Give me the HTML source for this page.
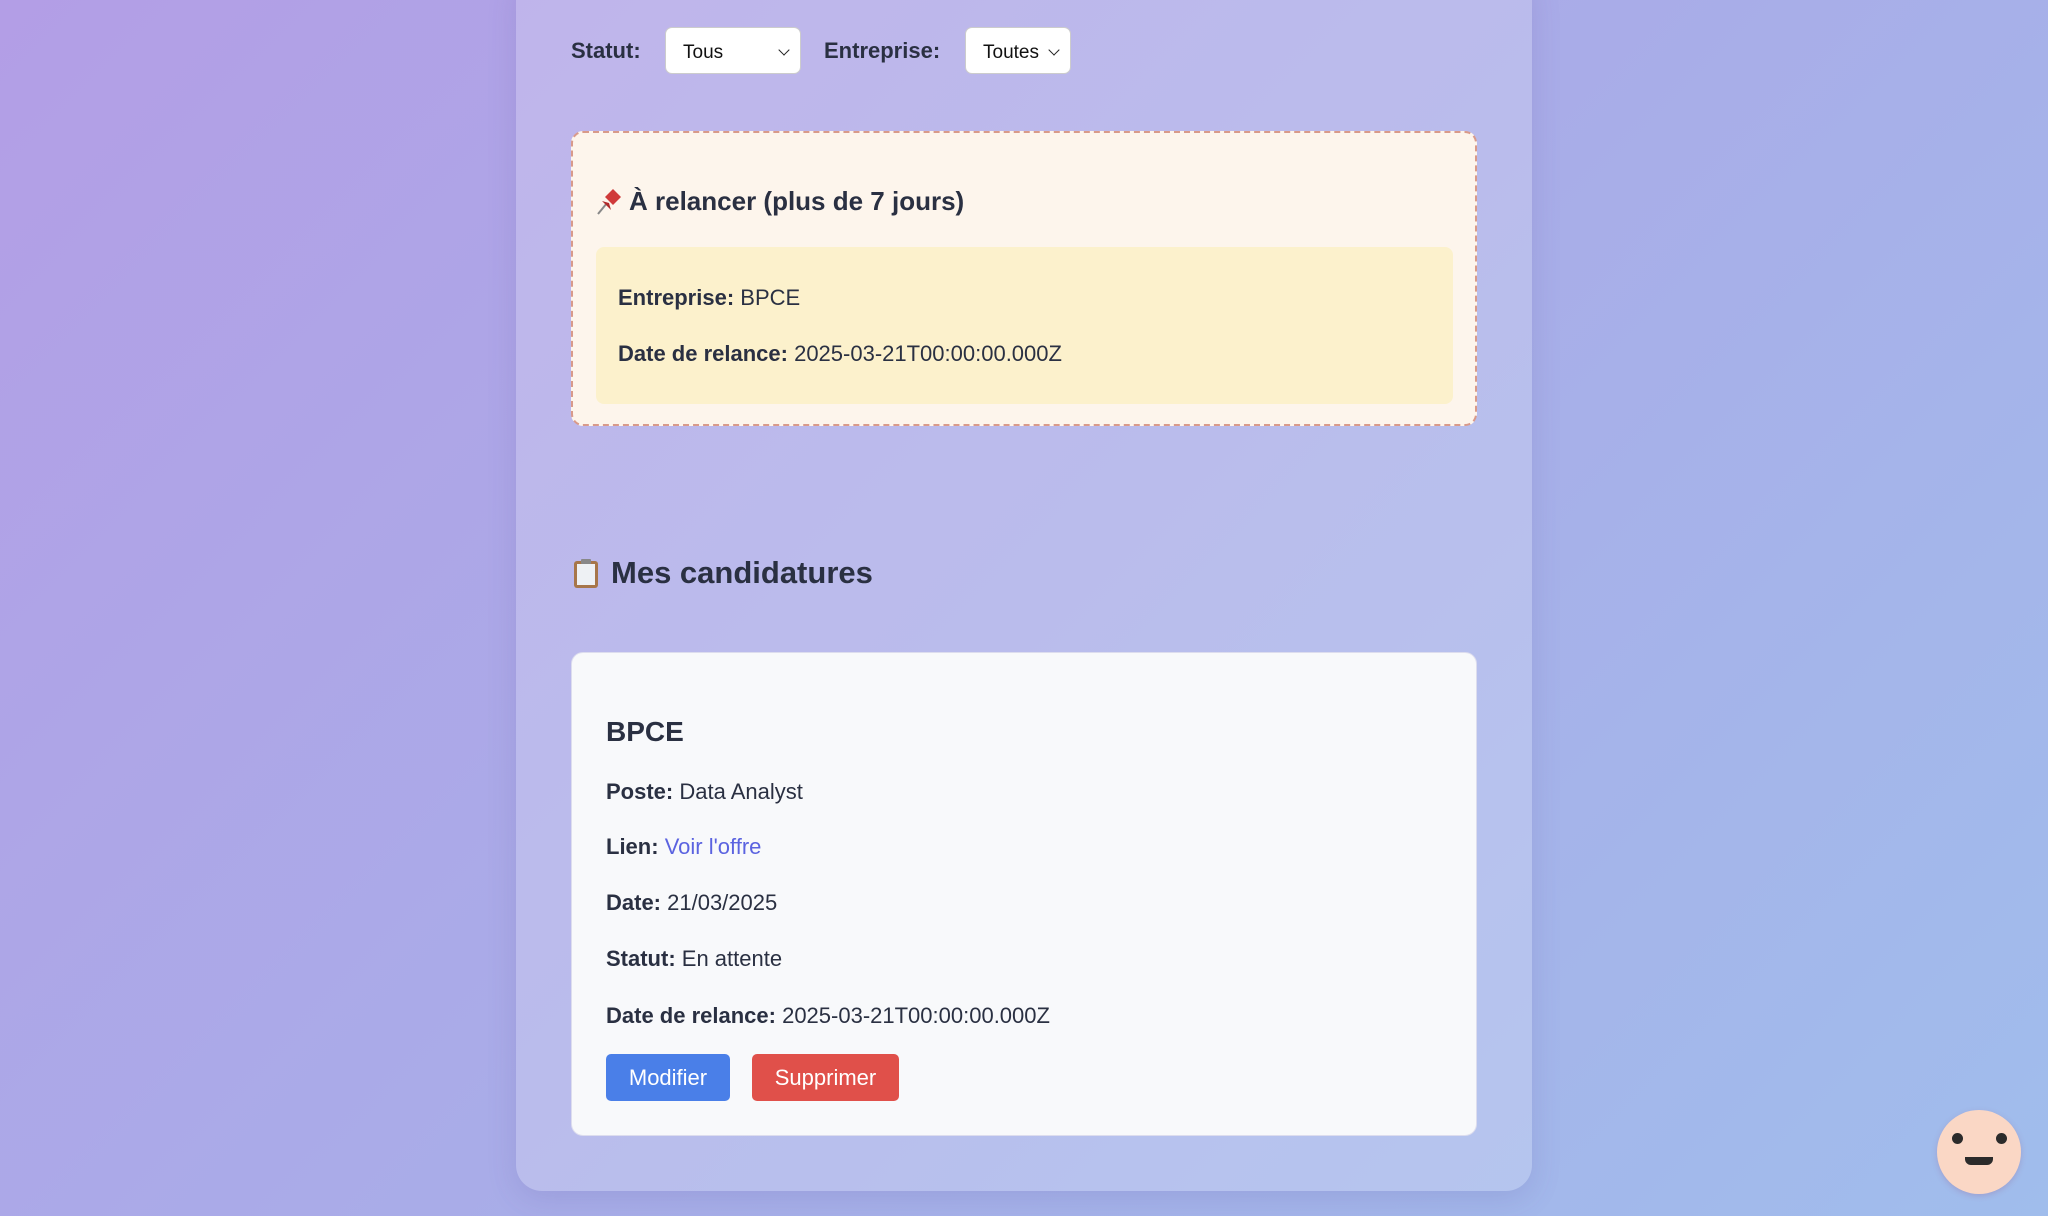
<!DOCTYPE html>
<html><head><meta charset="utf-8"><style>
*{box-sizing:border-box;margin:0;padding:0}
body{width:2048px;height:1216px;overflow:hidden;font-family:"Liberation Sans",sans-serif;color:#2a3042;
background:linear-gradient(135deg,#b39ee6 0%,#a9ace8 50%,#a0bdec 100%);position:relative}
.cont{position:absolute;left:516px;top:-30px;width:1016px;height:1221px;border-radius:26px;background:rgba(255,255,255,0.2);box-shadow:0 8px 30px rgba(80,70,150,0.15)}
.lbl{position:absolute;font-weight:bold;font-size:22px;top:38px}
.sel{position:absolute;top:27px;height:47px;background:#fff;border-radius:7px;border:1px solid #ccc;font-size:19px;padding:14px 17px;color:#111}
.sel:after{content:"";position:absolute;right:12px;top:18px;width:7px;height:7px;border-right:1.6px solid #222;border-bottom:1.6px solid #222;transform:rotate(45deg)}
.alert{position:absolute;left:571px;top:131px;width:906px;height:295px;background:#fdf5ec;border:2px dashed #d99a8a;border-radius:12px}
.alert h3{position:absolute;left:56px;top:53px;font-size:26px}
.inner{position:absolute;left:23px;top:114px;width:857px;height:157px;background:#fcf1cc;border-radius:8px}
.line{position:absolute;font-size:22px}
.card{position:absolute;left:571px;top:652px;width:906px;height:484px;background:#f8f9fb;border:1px solid #dde;border-radius:12px}
.btn{position:absolute;top:1054px;height:47px;border-radius:5px;color:#fff;font-size:22px;text-align:center;line-height:47px}
</style></head><body>
<div class="cont"></div>
<div class="lbl" style="left:571px">Statut:</div>
<div class="sel" style="left:665px;width:136px">Tous</div>
<div class="lbl" style="left:824px">Entreprise:</div>
<div class="sel" style="left:965px;width:106px">Toutes</div>
<div class="alert">
<svg style="position:absolute;left:22px;top:54px" width="28" height="30" viewBox="0 0 28 30"><line x1="3" y1="27" x2="12" y2="16" stroke="#888" stroke-width="2"/><path d="M10 10 L18 2 L26 10 L18 18 Z" fill="#d03a3a"/><path d="M7 14 L16 23 L14 16 Z" fill="#b02a2a"/></svg>
<h3>À relancer (plus de 7 jours)</h3>
<div class="inner">
<div class="line" style="left:22px;top:38px"><b>Entreprise:</b> BPCE</div>
<div class="line" style="left:22px;top:94px"><b>Date de relance:</b> 2025-03-21T00:00:00.000Z</div>
</div></div>
<svg style="position:absolute;left:572px;top:557px" width="28" height="32" viewBox="0 0 28 32"><rect x="2" y="4" width="24" height="27" rx="3" fill="#a7764a"/><rect x="5" y="7" width="18" height="21" fill="#eef1f4"/><rect x="9" y="2" width="10" height="5" rx="1" fill="#888"/></svg>
<div style="position:absolute;left:611px;top:555px;font-size:31px;font-weight:bold">Mes candidatures</div>
<div class="card"></div>
<div class="line" style="left:606px;top:716px;font-size:28px;font-weight:bold">BPCE</div>
<div class="line" style="left:606px;top:779px"><b>Poste:</b> Data Analyst</div>
<div class="line" style="left:606px;top:834px"><b>Lien:</b> <span style="color:#5b63e0">Voir l'offre</span></div>
<div class="line" style="left:606px;top:890px"><b>Date:</b> 21/03/2025</div>
<div class="line" style="left:606px;top:946px"><b>Statut:</b> En attente</div>
<div class="line" style="left:606px;top:1003px"><b>Date de relance:</b> 2025-03-21T00:00:00.000Z</div>
<div class="btn" style="left:606px;width:124px;background:#4a7fe8">Modifier</div>
<div class="btn" style="left:752px;width:147px;background:#e0504a">Supprimer</div>
<div style="position:absolute;left:1937px;top:1110px;width:84px;height:84px;border-radius:50%;background:#fad7c5;box-shadow:0 2px 6px rgba(150,100,150,0.3)">
<div style="position:absolute;left:15px;top:23px;width:11px;height:11px;border-radius:50%;background:#2b2b2b"></div>
<div style="position:absolute;left:59px;top:23px;width:11px;height:11px;border-radius:50%;background:#2b2b2b"></div>
<div style="position:absolute;left:28px;top:47px;width:28px;height:8px;border-radius:0 0 6px 6px;background:#2b2b2b"></div>
</div>
</body></html>
